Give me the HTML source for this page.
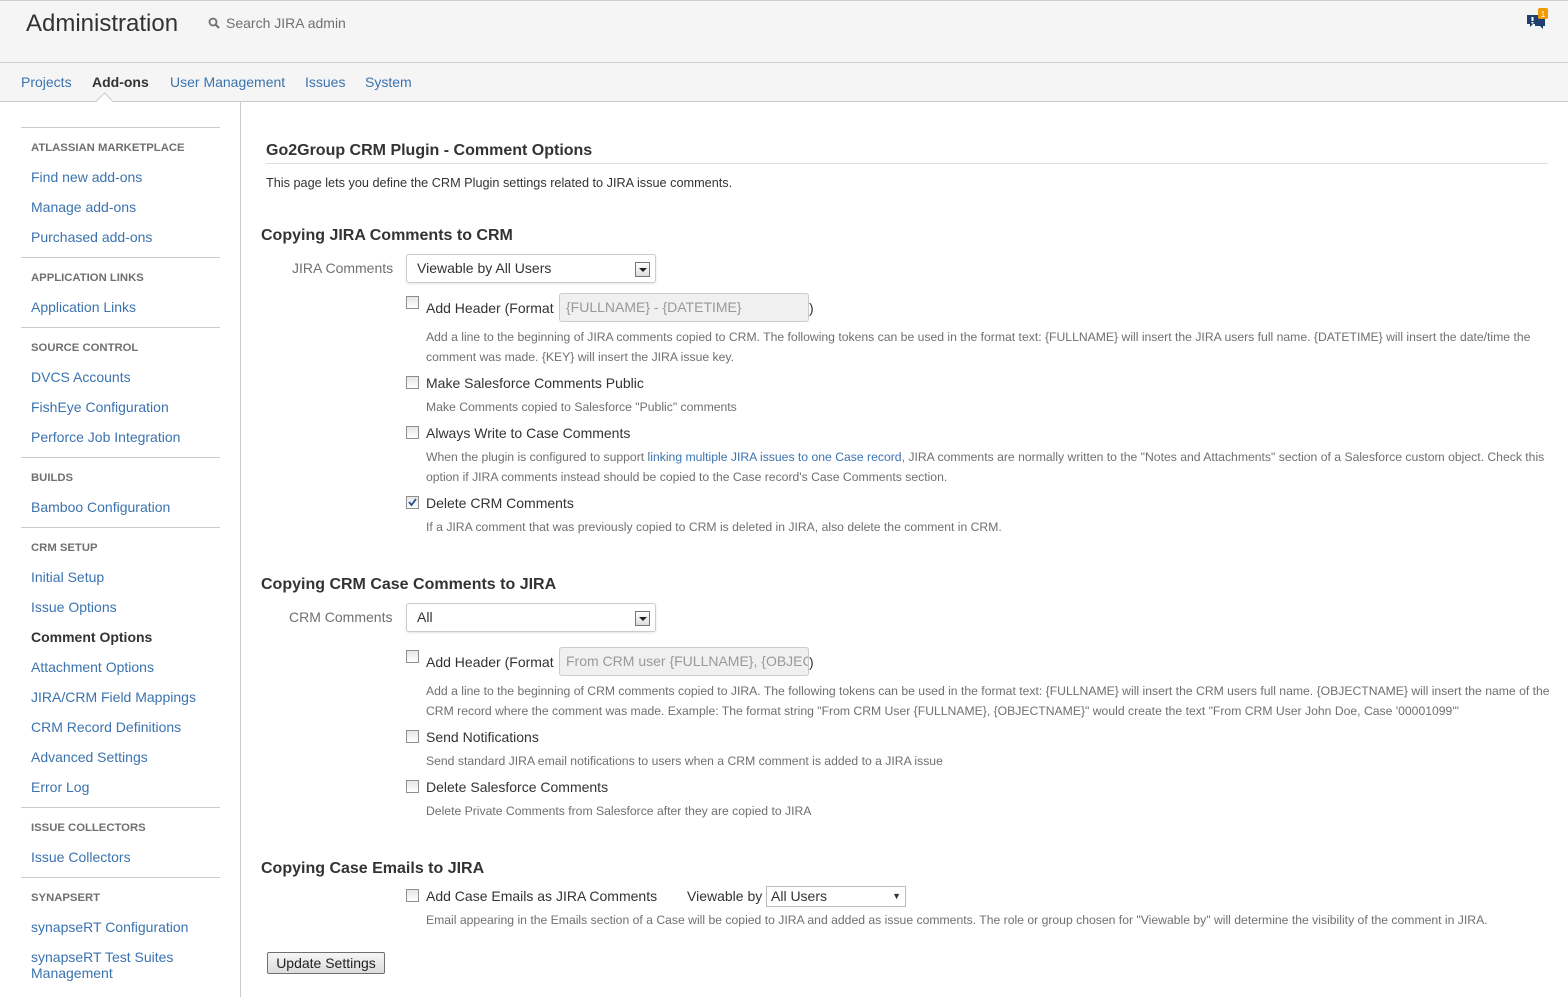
<!DOCTYPE html>
<html><head><meta charset="utf-8"><style>
*{margin:0;padding:0;box-sizing:border-box}
body{width:1568px;height:997px;position:relative;overflow:hidden;background:#fff;font-family:"Liberation Sans",Arial,sans-serif;color:#333}
.a{position:absolute;white-space:nowrap}
.hdr{position:absolute;left:0;top:0;width:1568px;height:63px;background:#f5f5f5;border-bottom:1px solid #ccc;border-top:1px solid #ccc}
.nav{position:absolute;left:0;top:63px;width:1568px;height:39px;background:#f5f5f5;border-bottom:1px solid #ccc}
.side{position:absolute;left:0;top:102px;width:241px;height:895px;border-right:1px solid #ccc;background:#fff}
.hr{position:absolute;left:21px;width:199px;height:1px;background:#ccc}
.sh{position:absolute;left:31px;font-size:11.3px;font-weight:bold;color:#707070;line-height:14px}
.sl{position:absolute;left:31px;font-size:14px;color:#3b73af;line-height:16px}
.l14{font-size:14px;line-height:16px}
.help{font-size:12.2px;line-height:20px;color:#707070;position:absolute;left:426px;width:1125px;white-space:normal}
.h2{font-size:16px;font-weight:bold;color:#333;line-height:18px}
.cb{position:absolute;width:13px;height:13px;border:1px solid #8f8f8f;background:linear-gradient(#e6e6e6,#fff);left:406px}
.sel{position:absolute;height:29px;border:1px solid #ccc;border-radius:3px;background:#fff;font-size:14px;line-height:27px;padding-left:10px;box-shadow:0 1px 2px rgba(0,0,0,.1)}
.arr{position:absolute;right:5px;top:7px;width:15px;height:15px;border:1px solid #777;background:linear-gradient(#fff,#ddd)}
.arr:after{content:"";position:absolute;left:3px;top:5px;border:4px solid transparent;border-top:4px solid #222;border-bottom:0}
.inp{position:absolute;height:29px;border:1px solid #ccc;border-radius:3px;background:#f0f0f0;color:#999;font-size:14px;line-height:27px;padding-left:6px;overflow:hidden;white-space:nowrap}
</style></head><body>
<div class="hdr"></div>
<div class="a" style="left:26px;top:10px;font-size:24px;color:#333;line-height:28px">Administration</div>
<svg class="a" style="left:208px;top:17px" width="12" height="12" viewBox="0 0 12 12"><circle cx="5" cy="5" r="3.5" fill="none" stroke="#707070" stroke-width="1.8"/><path d="M7.5 7.5L11 11" stroke="#707070" stroke-width="2"/></svg>
<div class="a l14" style="left:226px;top:15px;color:#707070">Search JIRA admin</div>
<svg class="a" style="left:1526px;top:8px" width="24" height="26" viewBox="0 0 24 26"><path d="M1 7h11v9H7l-3 3v-3H1z" fill="#1f3f6f"/><path d="M9 10h10v8h-2v3l-3-3H9z" fill="#1f3f6f"/><rect x="5.5" y="9" width="2" height="4" fill="#fff"/><rect x="5.5" y="14" width="2" height="1.5" fill="#fff"/><rect x="12" y="0" width="10" height="11" rx="2" fill="#f29a00"/><text x="17" y="9" font-size="8" fill="#fff" text-anchor="middle" font-family="Liberation Sans">1</text></svg>
<div class="nav"></div>
<div class="a l14" style="left:21px;top:74px;color:#3b73af">Projects</div>
<div class="a l14" style="left:92px;top:74px;font-weight:bold;color:#333">Add-ons</div>
<div class="a" style="left:98px;top:95px;width:13px;height:13px;background:#fff;border-left:1px solid #ccc;border-top:1px solid #ccc;transform:rotate(45deg);z-index:2"></div>
<div class="a l14" style="left:170px;top:74px;color:#3b73af">User Management</div>
<div class="a l14" style="left:305px;top:74px;color:#3b73af">Issues</div>
<div class="a l14" style="left:365px;top:74px;color:#3b73af">System</div>
<div class="side"></div>
<div class="hr" style="top:127px"></div>
<div class="sh" style="top:141px">ATLASSIAN MARKETPLACE</div>
<div class="sl" style="top:169px">Find new add-ons</div>
<div class="sl" style="top:199px">Manage add-ons</div>
<div class="sl" style="top:229px">Purchased add-ons</div>
<div class="hr" style="top:257px"></div>
<div class="sh" style="top:271px">APPLICATION LINKS</div>
<div class="sl" style="top:299px">Application Links</div>
<div class="hr" style="top:327px"></div>
<div class="sh" style="top:341px">SOURCE CONTROL</div>
<div class="sl" style="top:369px">DVCS Accounts</div>
<div class="sl" style="top:399px">FishEye Configuration</div>
<div class="sl" style="top:429px">Perforce Job Integration</div>
<div class="hr" style="top:457px"></div>
<div class="sh" style="top:471px">BUILDS</div>
<div class="sl" style="top:499px">Bamboo Configuration</div>
<div class="hr" style="top:527px"></div>
<div class="sh" style="top:541px">CRM SETUP</div>
<div class="sl" style="top:569px">Initial Setup</div>
<div class="sl" style="top:599px">Issue Options</div>
<div class="sl" style="top:629px;color:#333;font-weight:bold">Comment Options</div>
<div class="sl" style="top:659px">Attachment Options</div>
<div class="sl" style="top:689px">JIRA/CRM Field Mappings</div>
<div class="sl" style="top:719px">CRM Record Definitions</div>
<div class="sl" style="top:749px">Advanced Settings</div>
<div class="sl" style="top:779px">Error Log</div>
<div class="hr" style="top:807px"></div>
<div class="sh" style="top:821px">ISSUE COLLECTORS</div>
<div class="sl" style="top:849px">Issue Collectors</div>
<div class="hr" style="top:877px"></div>
<div class="sh" style="top:891px">SYNAPSERT</div>
<div class="sl" style="top:919px">synapseRT Configuration</div>
<div class="sl" style="top:949px;line-height:16px">synapseRT Test Suites<br>Management</div>

<div class="a h2" style="left:266px;top:142px">Go2Group CRM Plugin - Comment Options</div>
<div class="a" style="left:266px;top:163px;width:1282px;height:1px;background:#ddd"></div>
<div class="a" style="left:266px;top:176px;font-size:12.7px;line-height:14px;color:#333">This page lets you define the CRM Plugin settings related to JIRA issue comments.</div>

<div class="a h2" style="left:261px;top:227px">Copying JIRA Comments to CRM</div>
<div class="a l14" style="left:292px;top:260px;color:#707070">JIRA Comments</div>
<div class="sel" style="left:406px;top:254px;width:250px">Viewable by All Users<div class="arr"></div></div>
<div class="cb" style="top:296px"></div>
<div class="a l14" style="left:426px;top:300px">Add Header (Format</div>
<div class="inp" style="left:559px;top:293px;width:250px">{FULLNAME} - {DATETIME}</div>
<div class="a l14" style="left:809px;top:300px">)</div>
<div class="help" style="top:327px">Add a line to the beginning of JIRA comments copied to CRM. The following tokens can be used in the format text: {FULLNAME} will insert the JIRA users full name. {DATETIME} will insert the date/time the comment was made. {KEY} will insert the JIRA issue key.</div>
<div class="cb" style="top:376px"></div>
<div class="a l14" style="left:426px;top:375px">Make Salesforce Comments Public</div>
<div class="help" style="top:397px">Make Comments copied to Salesforce "Public" comments</div>
<div class="cb" style="top:426px"></div>
<div class="a l14" style="left:426px;top:425px">Always Write to Case Comments</div>
<div class="help" style="top:447px">When the plugin is configured to support <span style="color:#3b73af">linking multiple JIRA issues to one Case record</span>, JIRA comments are normally written to the "Notes and Attachments" section of a Salesforce custom object. Check this option if JIRA comments instead should be copied to the Case record's Case Comments section.</div>
<div class="cb" style="top:496px"><svg width="11" height="11" viewBox="0 0 11 11" style="position:absolute;left:0;top:0"><path d="M2 5l2.5 3L9 2" fill="none" stroke="#2a4f9a" stroke-width="1.8"/></svg></div>
<div class="a l14" style="left:426px;top:495px">Delete CRM Comments</div>
<div class="help" style="top:517px">If a JIRA comment that was previously copied to CRM is deleted in JIRA, also delete the comment in CRM.</div>

<div class="a h2" style="left:261px;top:576px">Copying CRM Case Comments to JIRA</div>
<div class="a l14" style="left:289px;top:609px;color:#707070">CRM Comments</div>
<div class="sel" style="left:406px;top:603px;width:250px">All<div class="arr"></div></div>
<div class="cb" style="top:650px"></div>
<div class="a l14" style="left:426px;top:654px">Add Header (Format</div>
<div class="inp" style="left:559px;top:647px;width:250px">From CRM user {FULLNAME}, {OBJECTNAME}</div>
<div class="a l14" style="left:809px;top:654px">)</div>
<div class="help" style="top:681px">Add a line to the beginning of CRM comments copied to JIRA. The following tokens can be used in the format text: {FULLNAME} will insert the CRM users full name. {OBJECTNAME} will insert the name of the CRM record where the comment was made. Example: The format string "From CRM User {FULLNAME}, {OBJECTNAME}" would create the text "From CRM User John Doe, Case '00001099'"</div>
<div class="cb" style="top:730px"></div>
<div class="a l14" style="left:426px;top:729px">Send Notifications</div>
<div class="help" style="top:751px">Send standard JIRA email notifications to users when a CRM comment is added to a JIRA issue</div>
<div class="cb" style="top:780px"></div>
<div class="a l14" style="left:426px;top:779px">Delete Salesforce Comments</div>
<div class="help" style="top:801px">Delete Private Comments from Salesforce after they are copied to JIRA</div>

<div class="a h2" style="left:261px;top:860px">Copying Case Emails to JIRA</div>
<div class="cb" style="top:889px"></div>
<div class="a l14" style="left:426px;top:888px">Add Case Emails as JIRA Comments</div>
<div class="a l14" style="left:687px;top:888px">Viewable by</div>
<div class="a" style="left:766px;top:886px;width:140px;height:21px;border:1px solid #bbb;font-size:14px;line-height:19px;padding-left:4px;background:#fff">All Users<span style="position:absolute;right:4px;top:0;font-size:9px">▼</span></div>
<div class="help" style="top:910px">Email appearing in the Emails section of a Case will be copied to JIRA and added as issue comments. The role or group chosen for "Viewable by" will determine the visibility of the comment in JIRA.</div>
<div class="a" style="left:267px;top:952px;width:118px;height:22px;border:1px solid #707070;border-radius:2px;background:linear-gradient(#f6f6f6,#dcdcdc);font-size:14px;line-height:20px;text-align:center;color:#222">Update Settings</div>
</body></html>
